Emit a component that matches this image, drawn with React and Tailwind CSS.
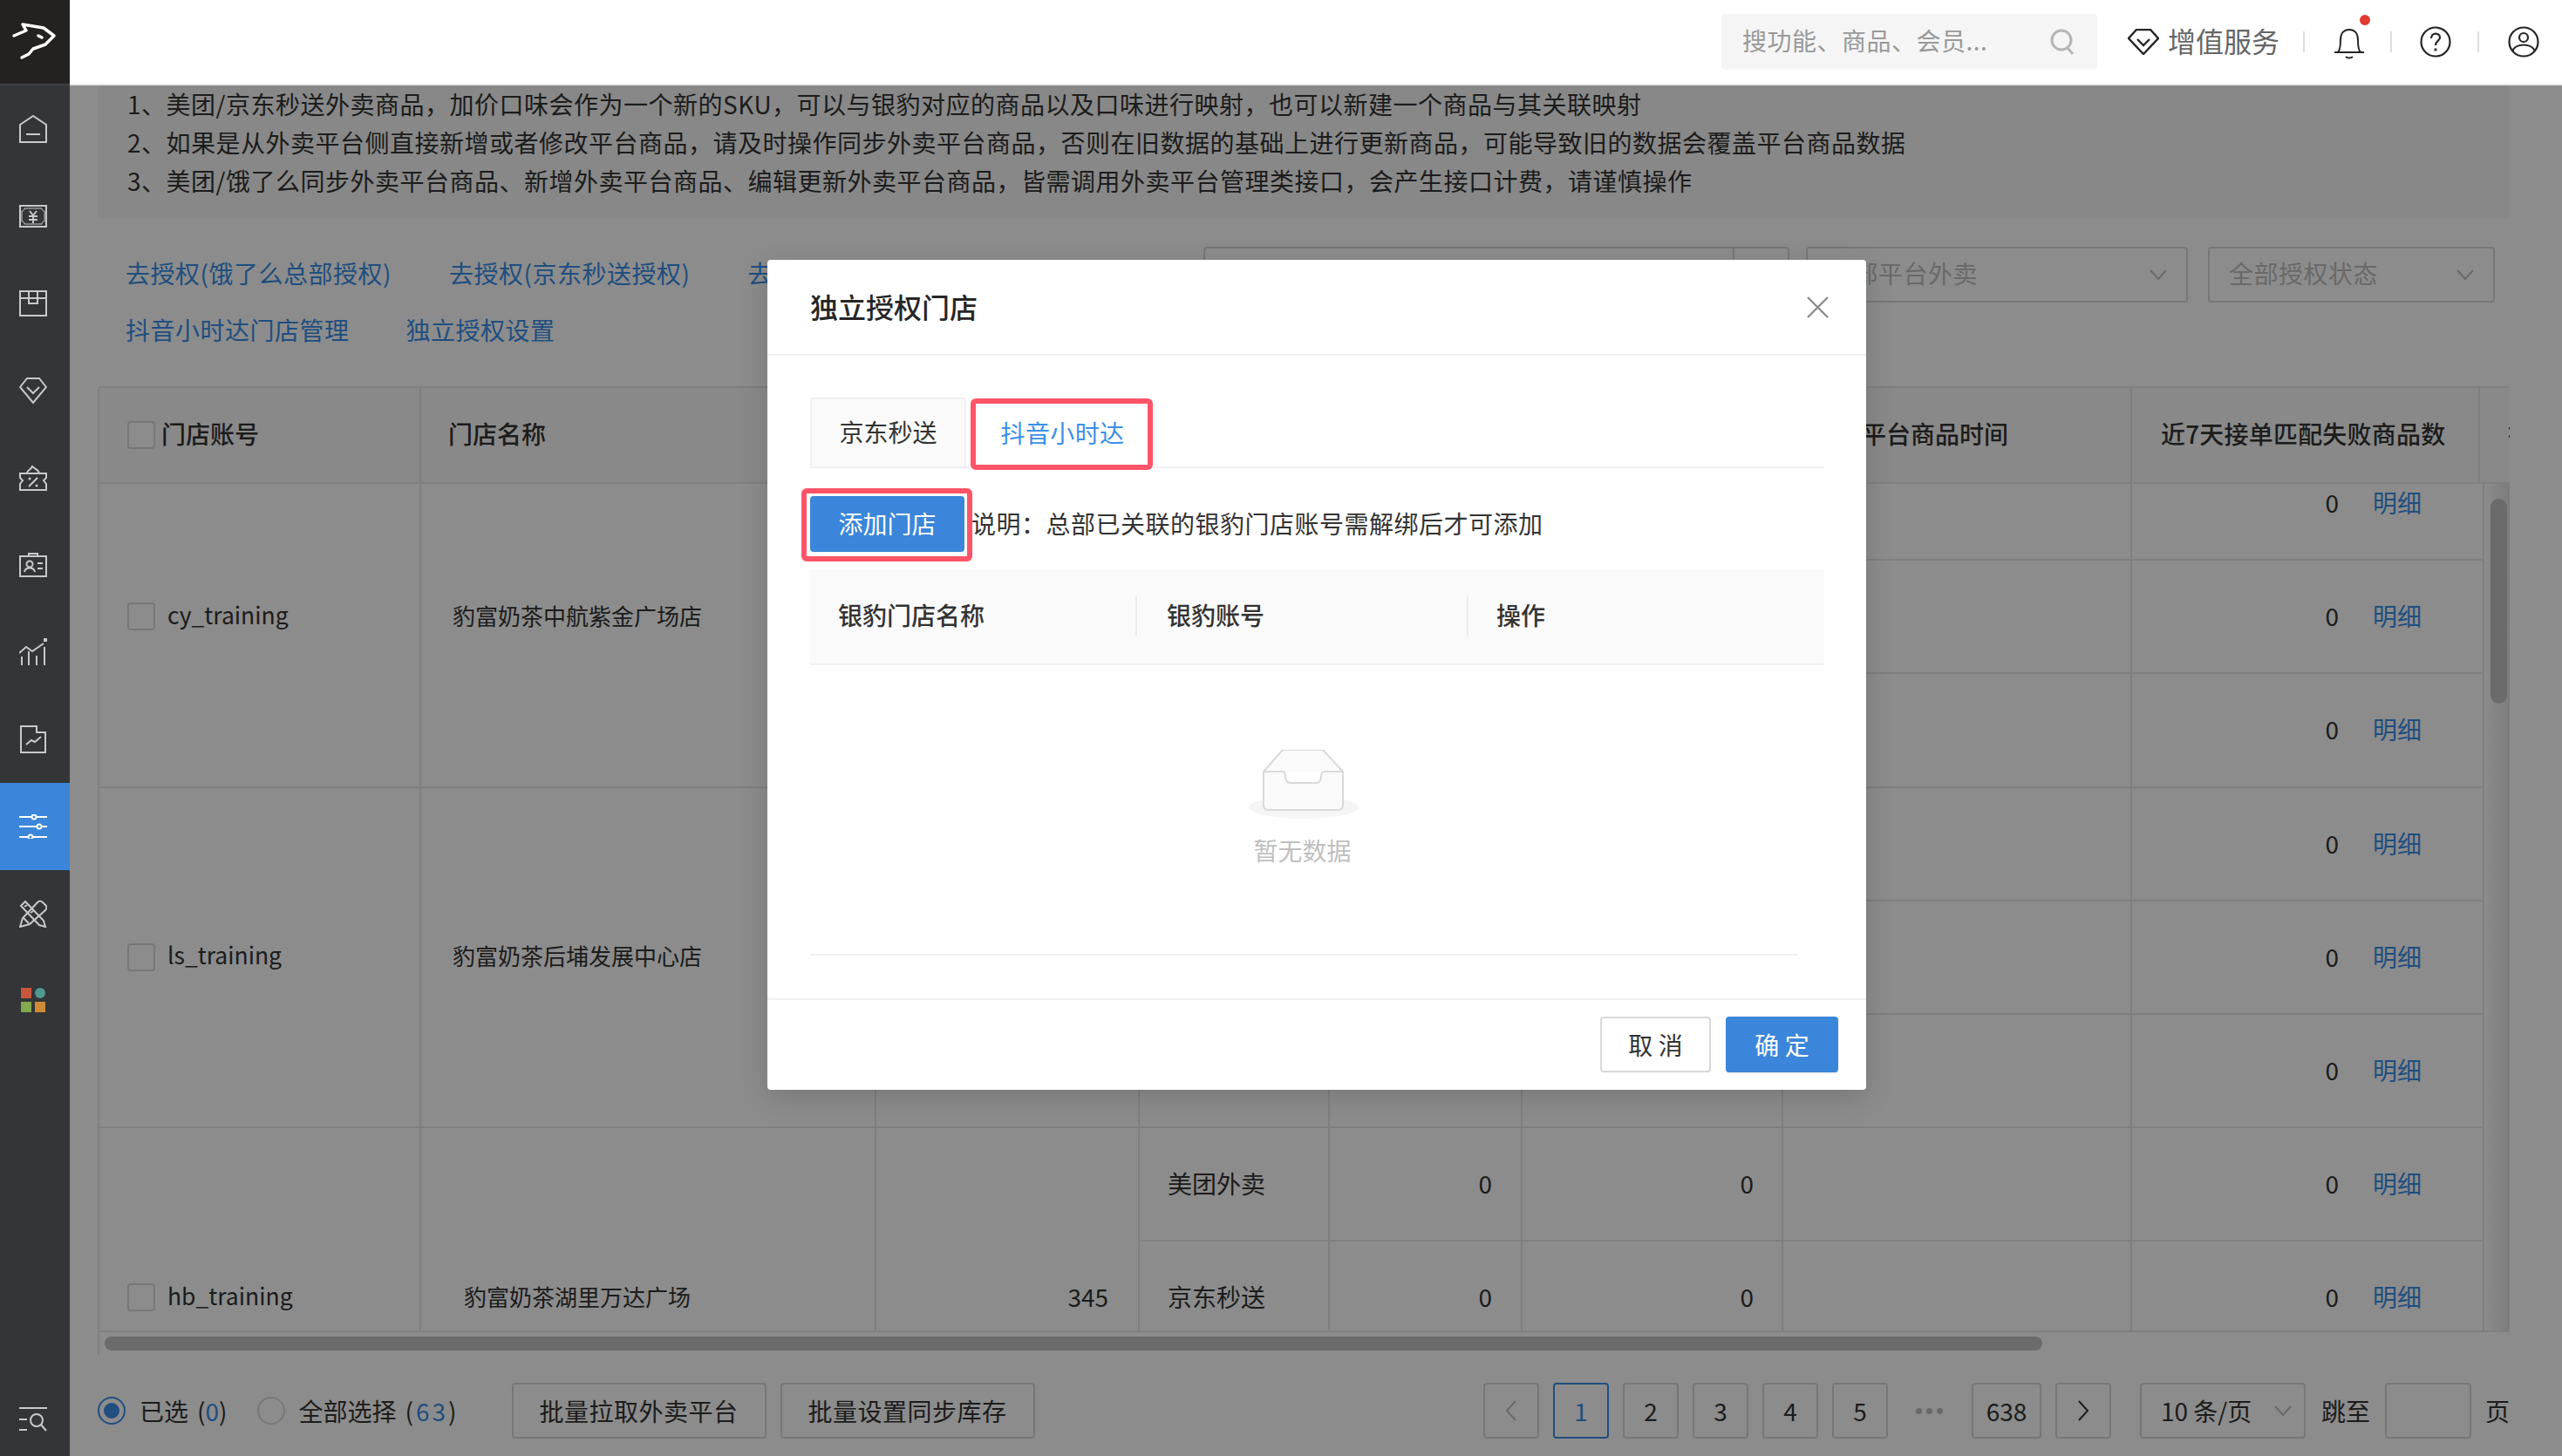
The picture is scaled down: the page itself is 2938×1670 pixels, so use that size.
// Store auth settings page, with the independent-auth modal open on top
const ICON = "#c9c9c9";

function NavIcon({ h, children, color = ICON, vb }) {
  return (
    <svg width="32" height={h} viewBox={vb || `0 0 32 ${h}`} fill="none" stroke={color} strokeWidth="2">
      {children}
    </svg>
  );
}

const navItems = [
  <NavIcon h={32} key="home">
    <path d="M1 11 16 1l15 10v20H1z" />
    <path d="M8 22h16" />
  </NavIcon>,
  <NavIcon h={26} key="money">
    <path d="M1 1h30v24H1z" />
    <path d="M6 4h20c0 2 1 3 3 3v12c-2 0-3 1-3 3H6c0-2-1-3-3-3V7c2 0 3-1 3-3z" strokeWidth="1" />
    <path d="M12 7l4 5 4-5M11 13h10M11 17h10M16 12v9" />
  </NavIcon>,
  <NavIcon h={30} key="box">
    <path d="M1 1h30v28H1zM1 9h30M11 1v14h10V1" />
  </NavIcon>,
  <NavIcon h={30} key="diamond">
    <path d="M9 1h14l8 10-15 18L1 11z" />
    <path d="M9 11l7 7 7-7" />
  </NavIcon>,
  <NavIcon h={30} key="coupon">
    <path d="M1 10h30v5l-3 3 3 4v7H1v-7l3-4-3-3z" />
    <path d="M9 9c1-3 4-3 6-7 3 3 6 3 8 7M11 25l10-10" />
    <circle cx="12" cy="16" r="1.5" fill={ICON} stroke="none" />
    <circle cx="20" cy="24" r="1.5" fill={ICON} stroke="none" />
  </NavIcon>,
  <NavIcon h={28} key="card">
    <path d="M1 4h30v23H1z" />
    <path d="M11 1h10v3H11z" />
    <circle cx="12" cy="13" r="3.5" />
    <path d="M6 22c1-6 11-6 12 0M21 12h6M21 18h6" />
  </NavIcon>,
  <NavIcon h={32} key="chart">
    <path d="M3 31V21M11 31V15M20 31V20M29 31V10M0 17l8-7 7 5 13-9" />
    <path d="M28 0h4v4h-4z" fill={ICON} stroke="none" />
  </NavIcon>,
  <NavIcon h={32} key="report">
    <path d="M2 31V1h18v7h10v23z" />
    <path d="M8 22l6-5 4 2 7-6" />
  </NavIcon>,
  <NavIcon h={28} key="sliders" color="#ffffff">
    <path d="M0 3h32M0 14h32M0 26h32" />
    <circle cx="17" cy="3" r="2.5" fill="#3b86da" />
    <circle cx="23" cy="14" r="2.5" fill="#3b86da" />
    <circle cx="13" cy="26" r="2.5" fill="#3b86da" />
  </NavIcon>,
  <NavIcon h={32} key="tools">
    <path d="M7 2 2 7l21 22 7 2-2-7z" />
    <path d="M1 31l3-10L21 3c2-2 4-2 6 0l3 3c2 2 2 4 0 6L12 28z" />
    <path d="M5 21l6 6M6 8l3-2M13 15l3-2" />
  </NavIcon>,
  <svg width="32" height="32" viewBox="0 0 32 32" key="apps">
    <rect x="2" y="1" width="12" height="12" fill="#c9573a" />
    <ellipse cx="24" cy="7" rx="6" ry="6" fill="#4f9a8f" />
    <rect x="2" y="17" width="12" height="12" fill="#84a94d" />
    <rect x="18" y="17" width="12" height="12" fill="#d08a36" />
  </svg>,
];

function Sidebar() {
  return (
    <div className="w-[80px] h-full flex flex-col bg-[#333538] shrink-0">
      <div className="h-[98px] bg-[#232220] border-b-2 border-[#3f4246] flex items-center justify-center shrink-0">
        <svg width="80" height="80" viewBox="0 0 80 80" fill="none" stroke="#ffffff" strokeWidth="3.5" strokeLinejoin="round" strokeLinecap="round">
          <path d="M16 33l14-6-4-7 12 2 12 2 12 9-10 10-14 5-5 6-8 4" />
          <path d="M44 33l4 2" />
        </svg>
      </div>
      {navItems.map((icon, i) => (
        <div key={i} className={`h-[100px] flex items-center pl-[22px] shrink-0 ${i === 8 ? "bg-[#3b86da]" : ""}`}>
          {icon}
        </div>
      ))}
      <div className="mt-auto h-[84px] flex items-center pl-[22px]">
        <NavIcon h={30}>
          <path d="M0 2h32M0 15h9M0 27h9" />
          <circle cx="20" cy="16" r="7" />
          <path d="M25 21l6 7" />
        </NavIcon>
      </div>
    </div>
  );
}

function TopBar() {
  return (
    <div className="h-[98px] bg-white border-b-2 border-[#e6e6e6] flex items-center justify-end pr-[26px] shrink-0">
      <div className="w-[431px] h-[64px] bg-[#f5f5f5] rounded-[4px] flex items-center pl-[24px] pr-[26px] justify-between text-[28px] tracking-[0.5px] text-[#999999]">
        <span className="pb-[4px]">搜功能、商品、会员...</span>
        <svg width="28" height="30" viewBox="0 0 28 30" fill="none" stroke="#b5b5b5" strokeWidth="3">
          <circle cx="13" cy="13" r="11" />
          <path d="M20 22l6 7" />
        </svg>
      </div>
      <svg className="ml-[35px]" width="36" height="30" viewBox="0 0 36 30" fill="none" stroke="#262626" strokeWidth="2.4">
        <path d="M10 1h16l9 10-17 18L1 11z" />
        <path d="M11 12l7 7 7-7" />
      </svg>
      <span className="ml-[10px] w-[128px] pb-[4px] text-[32px] text-[#666666] whitespace-nowrap">增值服务</span>
      <div className="ml-[27px] w-[2px] h-[24px] bg-[#dddddd]" />
      <div className="ml-[34px] mt-[4px] relative">
        <svg className="block" width="34" height="36" viewBox="0 0 34 36" fill="none" stroke="#262626" strokeWidth="2">
          <path d="M0 28h34M4 28c3-3 3-8 3-14C7 6 11 2 17 2s10 4 10 12c0 6 0 11 3 14" />
          <path d="M13 33c2 2 6 2 8 0" />
        </svg>
        <span className="absolute -top-[15px] -right-[7px] w-[12px] h-[12px] rounded-full bg-[#e03b32]" />
      </div>
      <div className="ml-[30px] w-[2px] h-[24px] bg-[#dddddd]" />
      <svg className="ml-[32px]" width="36" height="36" viewBox="0 0 36 36" fill="none" stroke="#262626" strokeWidth="2.2">
        <circle cx="18" cy="18" r="16.5" />
        <path d="M13 14c0-7 10-7 10-1 0 4-5 4-5 9" />
        <circle cx="18" cy="27" r="0.6" fill="#262626" />
      </svg>
      <div className="ml-[30px] w-[2px] h-[24px] bg-[#dddddd]" />
      <svg className="ml-[33px]" width="36" height="36" viewBox="0 0 36 36" fill="none" stroke="#262626" strokeWidth="2.2">
        <circle cx="18" cy="18" r="16.5" />
        <circle cx="18" cy="13" r="5" />
        <path d="M5 29c3-10 23-10 26 0" />
      </svg>
    </div>
  );
}

function Chevron({ color = "#bfbfbf" }) {
  return (
    <svg width="20" height="12" viewBox="0 0 20 12" fill="none" stroke={color} strokeWidth="2">
      <path d="M1 1l9 10 9-10" />
    </svg>
  );
}

function Select({ width, label, padding }) {
  return (
    <div className={`${width} ${padding} h-[64px] border-2 border-[#d9d9d9] rounded-[4px] flex items-center justify-between pr-[22px] text-[28px] tracking-[0.5px] text-[#bfbfbf]`}>
      <span className="pb-[5px]">{label}</span>
      <Chevron />
    </div>
  );
}

function Checkbox() {
  return <span className="w-[32px] h-[32px] border-2 border-[#d9d9d9] rounded-[4px] bg-white shrink-0" />;
}

const colBorder = "border-r-2 border-[#e8e8e8]";
const groups = [
  { account: "cy_training", name: "豹富奶茶中航紫金广场店" },
  { account: "ls_training", name: "豹富奶茶后埔发展中心店" },
  { account: "hb_training", name: "豹富奶茶湖里万达广场", count: "345" },
];
const platforms = ["美团外卖", "京东秒送", "抖音小时达"];

function DataTable() {
  return (
    <div className="mr-[60px] ml-[32px] h-[1111px] flex flex-col overflow-hidden border-l-2 border-t-2 border-[#e8e8e8] rounded-t-[4px] shrink-0">
      <div className="h-[110px] bg-[#fafafa] border-b-2 border-[#e8e8e8] flex text-[28px] font-medium text-[#333333] shrink-0 overflow-hidden">
        <div className={`w-[369px] ${colBorder} flex items-center pl-[32px] shrink-0`}>
          <Checkbox />
          <span className="ml-[7px] pb-[5px]">门店账号</span>
        </div>
        <div className={`w-[522px] ${colBorder} flex items-center pl-[31px] pb-[5px] shrink-0`}>门店名称</div>
        <div className={`w-[302px] ${colBorder} shrink-0`} />
        <div className={`w-[218px] ${colBorder} shrink-0`} />
        <div className={`w-[221px] ${colBorder} shrink-0`} />
        <div className={`w-[299px] ${colBorder} shrink-0`} />
        <div className={`w-[400px] ${colBorder} flex items-center pl-[34px] pb-[5px] shrink-0`}>同步平台商品时间</div>
        <div className={`w-[399px] ${colBorder} flex items-center pl-[33px] pb-[5px] tracking-[0.2px] shrink-0`}>近7天接单匹配失败商品数</div>
        <div className="pl-[32px] pb-[5px] whitespace-nowrap flex items-center">操作</div>
      </div>
      <div className="h-[971px] flex shrink-0">
        <div className="w-[2735px] overflow-hidden border-r-2 border-[#e8e8e8] shrink-0">
          <div className="-mt-[42px]">
            {groups.map((g) => (
              <div key={g.account} className="flex text-[28px] text-[#333333]">
                <div className={`w-[369px] ${colBorder} border-b-2 flex items-center pl-[32px] shrink-0`}>
                  <Checkbox />
                  <span className="ml-[14px] pb-[5px] text-[26.5px]">{g.account}</span>
                </div>
                <div className={`w-[522px] ${colBorder} border-b-2 flex items-center justify-center pr-[162px] pb-[4px] text-[26px] shrink-0`}>{g.name}</div>
                <div className={`w-[302px] ${colBorder} border-b-2 flex items-center justify-end pr-[34px] pb-[2px] shrink-0`}>{g.count}</div>
                <div className="flex-1">
                  {platforms.map((p) => (
                    <div key={p} className="h-[130.2px] flex border-b-2 border-[#e8e8e8]">
                      <div className={`w-[218px] ${colBorder} flex items-center pl-[32px] pb-[2px]`}>{p}</div>
                      <div className={`w-[221px] ${colBorder} flex items-center justify-end pr-[33px] pb-[2px]`}>0</div>
                      <div className={`w-[299px] ${colBorder} flex items-center justify-end pr-[32px] pb-[2px]`}>0</div>
                      <div className={`w-[400px] ${colBorder}`} />
                      <div className="w-[400px] flex items-center justify-end pr-[68px] pb-[2px]">
                        <span>0</span>
                        <span className="ml-[39px] text-[#3a8fe8]">明细</span>
                      </div>
                    </div>
                  ))}
                </div>
              </div>
            ))}
          </div>
        </div>
        <div className="flex-1 bg-gradient-to-r from-white to-[#e2e2e2] pl-[7px] pt-[17px]">
          <div className="w-[19px] h-[235px] rounded-full bg-[#c4c4c4]" />
        </div>
      </div>
      <div className="flex-1 border-t-2 border-[#e8e8e8] pl-[6px] pt-[5px]">
        <div className="w-[2222px] h-[16px] rounded-full bg-[#c4c4c4]" />
      </div>
    </div>
  );
}

function PageBtn({ children, active, width = "w-[64px]" }) {
  return (
    <div className={`${width} h-[64px] border-2 rounded-[4px] flex items-center justify-center text-[28px] ${active ? "border-[#3a8fe8] text-[#3a8fe8]" : "border-[#d9d9d9] text-[#333333]"}`}>
      {children}
    </div>
  );
}

function Footer() {
  return (
    <div className="flex-1 flex items-center justify-between pl-[32px] pr-[60px] pt-[12px] text-[28px] text-[#333333]">
      <div className="flex items-center">
        <span className="w-[32px] h-[32px] rounded-full border-2 border-[#3a8fe8] flex items-center justify-center">
          <span className="w-[18px] h-[18px] rounded-full bg-[#3a8fe8]" />
        </span>
        <span className="ml-[16px]">已选</span>
        <span className="ml-[10px]">(<span className="text-[#3a8fe8]">0</span>)</span>
        <span className="ml-[34px] w-[32px] h-[32px] rounded-full border-2 border-[#d9d9d9]" />
        <span className="ml-[16px]">全部选择</span>
        <span className="ml-[10px] tracking-[3px]">(<span className="text-[#3a8fe8]">63</span>)</span>
        <div className="ml-[60px] w-[292px] h-[64px] border-2 border-[#d9d9d9] rounded-[4px] flex items-center justify-center tracking-[0.5px]">批量拉取外卖平台</div>
        <div className="ml-[16px] w-[292px] h-[64px] border-2 border-[#d9d9d9] rounded-[4px] flex items-center justify-center tracking-[0.5px]">批量设置同步库存</div>
      </div>
      <div className="flex items-center">
        <div className="flex items-center gap-[16px]">
          <PageBtn>
            <svg width="14" height="24" viewBox="0 0 14 24" fill="none" stroke="#bfbfbf" strokeWidth="2">
              <path d="M12 1 2 12l10 11" />
            </svg>
          </PageBtn>
          <PageBtn active>1</PageBtn>
          <PageBtn>2</PageBtn>
          <PageBtn>3</PageBtn>
          <PageBtn>4</PageBtn>
          <PageBtn>5</PageBtn>
        </div>
        <div className="w-[96px] flex items-center justify-center gap-[5px]">
          <span className="w-[7px] h-[7px] rounded-full bg-[#bfbfbf]" />
          <span className="w-[7px] h-[7px] rounded-full bg-[#bfbfbf]" />
          <span className="w-[7px] h-[7px] rounded-full bg-[#bfbfbf]" />
        </div>
        <div className="flex items-center gap-[16px]">
          <PageBtn width="w-[80px]">638</PageBtn>
          <PageBtn>
            <svg width="14" height="24" viewBox="0 0 14 24" fill="none" stroke="#333333" strokeWidth="2">
              <path d="M2 1l10 11L2 23" />
            </svg>
          </PageBtn>
        </div>
        <div className="ml-[33px] w-[190px] h-[64px] border-2 border-[#d9d9d9] rounded-[4px] flex items-center justify-between pl-[22px] pr-[14px]">
          <span className="whitespace-nowrap">10 条/页</span>
          <Chevron />
        </div>
        <span className="ml-[18px]">跳至</span>
        <div className="ml-[17px] w-[99px] h-[64px] border-2 border-[#d9d9d9] rounded-[4px]" />
        <span className="ml-[16px]">页</span>
      </div>
    </div>
  );
}

function PageContent() {
  return (
    <div className="h-full flex flex-col bg-white">
      <div className="mx-[32px] mr-[60px] h-[153px] bg-[#f8f8f8] pl-[34px] text-[28px] leading-[44px] tracking-[0.5px] text-[#333333] shrink-0">
        <div className="-mt-[1px]">
          <p>1、美团/京东秒送外卖商品，加价口味会作为一个新的SKU，可以与银豹对应的商品以及口味进行映射，也可以新建一个商品与其关联映射</p>
          <p>2、如果是从外卖平台侧直接新增或者修改平台商品，请及时操作同步外卖平台商品，否则在旧数据的基础上进行更新商品，可能导致旧的数据会覆盖平台商品数据</p>
          <p>3、美团/饿了么同步外卖平台商品、新增外卖平台商品、编辑更新外卖平台商品，皆需调用外卖平台管理类接口，会产生接口计费，请谨慎操作</p>
        </div>
      </div>
      <div className="h-[192px] pt-[32px] pl-[64px] pr-[77px] flex justify-between shrink-0 text-[28px]">
        <div className="text-[#3a8fe8] tracking-[0.5px]">
          <div className="h-[64px] pb-[5px] flex items-center gap-[66px]">
            <span>去授权(饿了么总部授权)</span>
            <span>去授权(京东秒送授权)</span>
            <span>去授权</span>
          </div>
          <div className="h-[64px] pb-[3px] flex items-center gap-[65px]">
            <span>抖音小时达门店管理</span>
            <span>独立授权设置</span>
          </div>
        </div>
        <div className="flex items-start">
          <div className="w-[609px] h-[64px] border-2 border-[#d9d9d9] rounded-l-[4px]" />
          <div className="w-[63px] h-[64px] border-2 border-l-0 border-[#d9d9d9] rounded-r-[4px]" />
          <div className="ml-[19px]">
            <Select width="w-[438px]" padding="pl-[24px]" label="全部平台外卖" />
          </div>
          <div className="ml-[23px]">
            <Select width="w-[329px]" padding="pl-[22px]" label="全部授权状态" />
          </div>
        </div>
      </div>
      <DataTable />
      <Footer />
    </div>
  );
}

function EmptyBox() {
  return (
    <svg width="126" height="79" viewBox="0 0 126 79">
      <ellipse cx="63" cy="66" rx="63" ry="13" fill="#f5f5f5" />
      <path d="M17 25l22-25h46l23 25v38c0 4-2 6-5 6H22c-3 0-5-2-5-6z" fill="#fafafa" stroke="#d9d9d9" strokeWidth="2" />
      <path d="M17 25h21c3 0 4 2 4 5 0 5 2 8 6 8h29c4 0 6-3 6-8 0-3 1-5 4-5h21" fill="#ffffff" stroke="#d9d9d9" strokeWidth="2" />
    </svg>
  );
}

function AuthModal() {
  return (
    <div className="w-[1260px] h-[952px] bg-white rounded-[4px] flex flex-col shadow-[0_8px_32px_rgba(0,0,0,0.15)] text-[28px] text-[#333333]">
      <div className="h-[110px] border-b-2 border-[#f0f0f0] flex items-center justify-between pl-[49px] pr-[43px] shrink-0">
        <span className="pb-[2px] text-[32px] font-medium text-[#262626]">独立授权门店</span>
        <svg width="25" height="25" viewBox="0 0 25 25" fill="none" stroke="#8c8c8c" strokeWidth="2.4">
          <path d="M1 1l23 23M24 1 1 24" />
        </svg>
      </div>
      <div className="flex-1 pt-[48px] pl-[49px] pr-[48px]">
        <div className="h-[81px] flex border-b-2 border-[#f0f0f0]">
          <div className="w-[179px] h-[79px] bg-[#fafafa] border-2 border-b-0 border-[#f0f0f0] rounded-t-[4px] pb-[3px] flex items-center justify-center">京东秒送</div>
          <div className="ml-[5px] mt-[1px] w-[209px] h-[82px] border-[6px] border-[#ff5468] rounded-[6px] bg-white pb-[5px] pl-[2px] flex items-center justify-center tracking-[0.4px] text-[#3a8fe8]">抖音小时达</div>
        </div>
        <div className="mt-[32px] flex items-center">
          <div className="relative">
            <div className="w-[177px] h-[64px] bg-[#3b86da] rounded-[4px] pb-[3px] flex items-center justify-center text-white">添加门店</div>
            <div className="absolute -left-[10px] -top-[9px] w-[196px] h-[84px] border-[6px] border-[#ff5468] rounded-[6px]" />
          </div>
          <span className="ml-[8px] pb-[3px] tracking-[0.5px]">说明：总部已关联的银豹门店账号需解绑后才可添加</span>
        </div>
        <div className="mt-[20px] h-[110px] bg-[#fafafa] border-b-2 border-[#f0f0f0] flex items-center font-medium">
          <div className="w-[375px] h-[46px] border-r-2 border-[#ececec] flex items-center pl-[32px] pb-[5px]">银豹门店名称</div>
          <div className="w-[380px] h-[46px] border-r-2 border-[#ececec] flex items-center pl-[34px] pb-[5px]">银豹账号</div>
          <div className="pl-[32px] pb-[5px]">操作</div>
        </div>
        <div className="h-[333px] w-[1133px] border-b-2 border-[#f0f0f0] flex flex-col items-center pt-[97px] text-[#bfbfbf]">
          <div className="ml-[-2px]">
            <EmptyBox />
          </div>
          <span className="mt-[18px] leading-[36px] ml-[-4px]">暂无数据</span>
        </div>
      </div>
      <div className="h-[105px] border-t-2 border-[#f0f0f0] flex justify-end gap-[17px] pt-[19px] pr-[32px] shrink-0">
        <div className="w-[127px] h-[64px] border-2 border-[#d9d9d9] rounded-[4px] bg-white flex items-center justify-center shadow-[0_2px_0_rgba(0,0,0,0.02)]">取 消</div>
        <div className="w-[129px] h-[64px] bg-[#3b86da] rounded-[4px] flex items-center justify-center text-white shadow-[0_2px_0_rgba(0,0,0,0.05)]">确 定</div>
      </div>
    </div>
  );
}

export default function App() {
  return (
    <div className="w-[2938px] h-[1670px] flex overflow-hidden bg-white font-['Noto_Sans_CJK_SC','Noto_Sans',sans-serif]">
      <Sidebar />
      <div className="flex-1 flex flex-col min-w-0">
        <TopBar />
        <div className="relative flex-1 min-h-0">
          <PageContent />
          <div className="absolute inset-0 bg-black/45 pl-[800px] pt-[200px]">
            <AuthModal />
          </div>
        </div>
      </div>
    </div>
  );
}
